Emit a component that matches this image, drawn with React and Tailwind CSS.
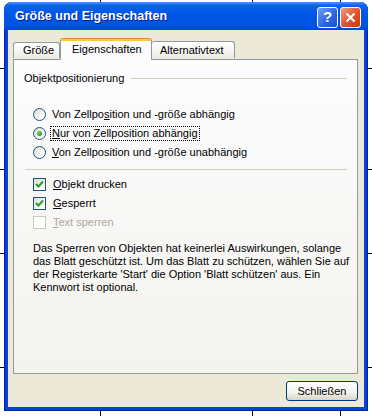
import { useState } from "react";

const font = { fontFamily: '"Liberation Sans", Arial, sans-serif' };

function Key({ children }) {
  return <span className="underline underline-offset-[1px]">{children}</span>;
}

function Radio({ checked, focused, children, onClick }) {
  return (
    <div className="flex items-center h-[19px] cursor-default" onClick={onClick}>
      <span className="w-[13px] h-[13px] rounded-full border border-[#1c5180] bg-[linear-gradient(135deg,#dcd9cb,#ffffff_75%)] flex items-center justify-center">
        {checked && (
          <span className="w-[5px] h-[5px] rounded-full bg-[radial-gradient(circle_at_35%_35%,#6ad46a,#21a121_70%)]" />
        )}
      </span>
      <span
        className={
          "ml-[5px] px-[1px] leading-[13px] " +
          (focused ? "outline outline-1 outline-dotted outline-black" : "")
        }
      >
        {children}
      </span>
    </div>
  );
}

function Check({ checked, disabled, children, onClick }) {
  return (
    <div className="flex items-center h-[19px] cursor-default" onClick={onClick}>
      <span
        className={
          "w-[13px] h-[13px] border flex items-center justify-center " +
          (disabled
            ? "border-[#cac8bb] bg-white"
            : "border-[#1c5180] bg-[linear-gradient(135deg,#dcdcd7,#ffffff_75%)]")
        }
      >
        {checked && (
          <svg width="9" height="9" viewBox="0 0 9 9">
            <path d="M1 4 L3.5 6.5 L8 1.5" fill="none" stroke="#21a121" strokeWidth="2" />
          </svg>
        )}
      </span>
      <span className={"ml-[7px] leading-[13px] " + (disabled ? "text-[#aca899]" : "")}>
        {children}
      </span>
    </div>
  );
}

export default function App() {
  const [pos, setPos] = useState(1);
  const [print, setPrint] = useState(true);
  const [locked, setLocked] = useState(true);

  return (
    <div className="relative w-[372px] h-[416px] bg-white overflow-hidden text-[11px] text-black" style={font}>
      <svg className="absolute inset-0" width="372" height="416">
        {[100, 252, 340].map((x) => (
          <line key={x} x1={x + 0.5} y1="0" x2={x + 0.5} y2="416" stroke="#000" />
        ))}
        {[68, 169, 253, 367].map((y) => (
          <line key={y} x1="0" y1={y + 0.5} x2="372" y2={y + 0.5} stroke="#000" />
        ))}
      </svg>

      <div className="relative ml-[4px] mt-[2px] w-[364px] h-[409px] flex flex-col rounded-t-[8px] bg-[#0842dc] shadow-[inset_0_0_0_1px_#0021a0]">
        <div className="h-[28px] flex items-center rounded-t-[8px] px-[7px] bg-[linear-gradient(to_bottom,#4a98fb_0%,#0a62f0_12%,#0056e6_45%,#0054e3_80%,#0049d6_100%)]">
          <span className="ml-[4px] text-white font-bold text-[12.5px] [text-shadow:1px_1px_0_#0a1e80]">
            Größe und Eigenschaften
          </span>
          <div className="ml-auto flex gap-[2px] mt-[2px]">
            <div className="w-[21px] h-[21px] rounded-[3px] border border-white bg-[linear-gradient(135deg,#6ea0f8,#2a63e0_60%,#1d4fd0)] flex items-center justify-center text-white font-bold text-[15px]">
              ?
            </div>
            <div className="w-[21px] h-[21px] rounded-[3px] border border-white bg-[linear-gradient(135deg,#f0a080,#e0502a_55%,#c83a12)] flex items-center justify-center">
              <svg width="11" height="11" viewBox="0 0 11 11">
                <path d="M1.5 1.5 L9.5 9.5 M9.5 1.5 L1.5 9.5" stroke="#fff" strokeWidth="2.2" />
              </svg>
            </div>
          </div>
        </div>

        <div className="flex-1 mx-[4px] mb-[4px] bg-[#ece9d8] pl-[5px] pr-[6px] pt-[7px] flex flex-col">
          <div className="flex items-end h-[22px] relative z-10">
            <div className="w-[47px] h-[16px] mb-px border border-b-0 border-[#919b9c] rounded-t-[3px] bg-[linear-gradient(to_bottom,#ffffff,#ecebe6)] flex items-center pl-[9px]">
              Größe
            </div>
            <div className="w-[92px] h-[22px] -mb-px border border-b-0 border-[#919b9c] border-t-[#e68b2c] rounded-t-[3px] bg-[#fcfcfe] flex flex-col">
              <div className="h-[2px] bg-[#ffc73c]" />
              <div className="flex-1 flex items-center pl-[11px] pb-[2px]">Eigenschaften</div>
            </div>
            <div className="w-[83px] h-[17px] mb-px border border-b-0 border-l-0 border-[#919b9c] rounded-t-[3px] bg-[linear-gradient(to_bottom,#ffffff,#ecebe6)] flex items-center pl-[8px]">
              Alternativtext
            </div>
          </div>

          <div className="h-[315px] border border-[#919b9c] bg-[linear-gradient(to_bottom,#fcfcfe,#f4f3ee)] pt-[12px] flex flex-col">
            <div className="flex items-center h-[13px] pl-[10px] pr-[10px]">
              <span>Objektpositionierung</span>
              <div className="flex-1 h-px bg-[#d0d0bf] ml-[7px]" />
            </div>

            <div className="mt-[20px] pl-[19px] flex flex-col">
              <Radio checked={pos === 0} onClick={() => setPos(0)}>
                Von Zellpo<Key>s</Key>ition und -größe abhängig
              </Radio>
              <Radio checked={pos === 1} focused onClick={() => setPos(1)}>
                <Key>N</Key>ur von Zellposition abhängig
              </Radio>
              <Radio checked={pos === 2} onClick={() => setPos(2)}>
                <Key>V</Key>on Zellposition und -größe unabhängig
              </Radio>
            </div>

            <div className="mt-[7px] ml-[11px] mr-[10px] h-px bg-[#d0d0bf]" />

            <div className="mt-[5px] pl-[19px] flex flex-col">
              <Check checked={print} onClick={() => setPrint(!print)}>
                <Key>O</Key>bjekt drucken
              </Check>
              <Check checked={locked} onClick={() => setLocked(!locked)}>
                <Key>G</Key>esperrt
              </Check>
              <Check disabled>
                <Key>T</Key>ext sperren
              </Check>
            </div>

            <p className="mt-[10px] pl-[19px] leading-[13px]">
              Das Sperren von Objekten hat keinerlei Auswirkungen, solange
              <br />
              das Blatt geschützt ist. Um das Blatt zu schützen, wählen Sie auf
              <br />
              der Registerkarte 'Start' die Option 'Blatt schützen' aus. Ein
              <br />
              Kennwort ist optional.
            </p>
          </div>

          <div className="flex justify-end mt-[7px]">
            <button className="w-[72px] h-[20px] rounded-[3px] border border-[#003c74] bg-[linear-gradient(to_bottom,#ffffff,#f3f2ec_60%,#d8d3c6)] text-[11px] leading-none">
              Schließen
            </button>
          </div>
        </div>
      </div>
    </div>
  );
}
